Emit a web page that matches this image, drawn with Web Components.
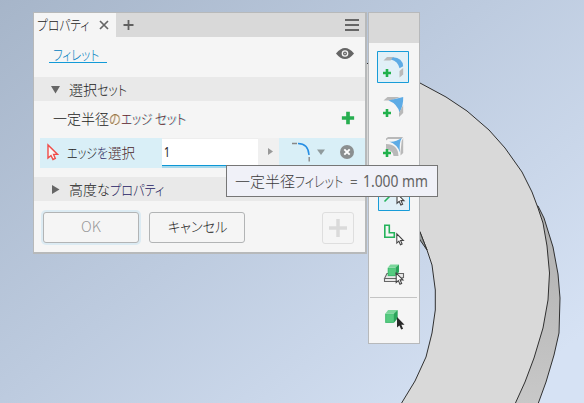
<!DOCTYPE html>
<html lang="ja"><head><meta charset="utf-8"><title>プロパティ</title>
<style>
body{margin:0;width:584px;height:403px;overflow:hidden;font-family:"Noto Sans CJK JP",sans-serif;font-weight:300;color:#222}
</style></head><body>
<cad-window></cad-window>
<script>
const define=(name,html,setup)=>customElements.define(name,class extends HTMLElement{
  connectedCallback(){
    if(this.shadowRoot)return;
    this.attachShadow({mode:'open'}).innerHTML=html;
    if(setup)setup(this,this.shadowRoot);
  }
});

/* Text run condensed horizontally to a given width */
define('fit-text',`<style>
:host{display:inline-block;flex:none;font-size:14px;line-height:20px;height:20px;white-space:pre}
span{display:inline-block;transform-origin:0 50%;font-feature-settings:"palt"}
</style><span><slot></slot></span>`,(h,r)=>{
  const w=+h.getAttribute('w'),s=r.querySelector('span');
  h.style.width=w+'px';
  s.style.transform='scaleX('+w/s.offsetWidth+')';
});

const plus='<path fill="#27ae50" d="M4 0h3.4v4h4v3.4h-4v4H4v-4H0V4h4z"/>';
const smallPlus='<path fill="#22b14c" d="M8.700 18h2.600v2.700H14v2.600h-2.700V26H8.700v-2.700H6v-2.600h2.700z"/>';
const arrow='<path d="M0 0v13.200l3-2.600 2.200 5 2.400-1-2.200-5h4z"/>';
const cube='<path fill="#38b768" d="M0 4h9v10H0z"/><path fill="#7bd69b" d="M0 4L3 0h10l-3 4z"/><path fill="#2aa45a" d="M9 4l4-4v9l-4 5z"/><path fill="#56cb80" d="M1 4.500h7.500V13H1z"/>';
const icons={
 round:'<path fill="#b9b9b9" d="M6.500 9.500L10 6h7l-3.500 3.500z"/><path fill="#5dabe5" d="M14 8.500L16 6.300q9.500.5 10.200 9l-3.700 2q-1.500-7-8.500-8.800z"/><path fill="#b9b9b9" d="M22.500 20l3.700-3v6.500l-3.700 3z"/>'+smallPlus,
 corner:'<path fill="#b9b9b9" d="M6.500 9.500L10.500 6H23l-9 3.500z"/><path fill="#5dabe5" d="M11.500 9.500L26.200 6q.3 9-3.700 15.500-2-8.500-11-12z"/><path fill="#b9b9b9" d="M22 26v-4l4.200-8v8z"/>'+smallPlus,
 full:'<path fill="#b9b9b9" d="M9 9.500V7.500L11 6h15.200L24 8H11zM9 13q12 0 12.500 12h-5q-.5-6-7.500-6.500zM23.500 24.500V21l1.200-11 1.500-3v15z"/><path fill="#5dabe5" d="M12 10.500q6 1 12.800-3.500-3 5-1.800 14.500-2.500-8-11-11z"/>'+smallPlus,
 edge:'<path d="M6.500 22.500L20 9" stroke="#24b35b" stroke-width="1.600"/><g transform="translate(19 14.500) scale(.74)" fill="#fff" stroke="#444" stroke-width="1.500">'+arrow+'</g>',
 loop:'<path fill="none" stroke="#24b35b" stroke-width="1.600" d="M7.800 8.200h4.500v7.500h5v4.500H7.800z"/><g transform="translate(19.800 16.800) scale(.7)" fill="#fff" stroke="#444" stroke-width="1.500">'+arrow+'</g>',
 feature:'<path fill="#e8e8e8" stroke="#666" stroke-width="1.100" d="M7.500 21.500L10 16.500h16.500v4l-4 1zM7.500 21.500V24.500h13l5.500-4"/><g transform="translate(10.700 7.500) scale(.87 .83)">'+cube+'</g><g transform="translate(19.200 16) scale(.72)" fill="#fff" stroke="#444" stroke-width="1.500">'+arrow+'</g>',
 solid:'<g transform="translate(8.200 7) scale(.96 .92)">'+cube+'</g><g transform="translate(20 14) scale(.8)" fill="#292929">'+arrow+'</g>'
};

define('tool-button',`<style>
:host{display:block;box-sizing:border-box;width:32px;height:32px;border-radius:1px}
:host([active]){background:#e1f0f7;box-shadow:inset 0 0 0 1px #189cd8}
svg{display:block}
</style><svg width="32" height="32"></svg>`,(h,r)=>{r.querySelector('svg').innerHTML=icons[h.getAttribute('icon')]});

define('tool-strip',`<style>
:host{display:flex;flex-direction:column;box-sizing:border-box;width:52px;height:332px;border:1px solid #b7b9bb;background:#f5f5f5}
header{height:30px;background:#d9d9d9;flex:none}
main{display:flex;flex-direction:column;gap:8px;padding:8px 0 0 8px}
hr{border:0;height:1px;background:#c4c4c4;margin:0 0 0 -7px;width:47px}
.alt{margin-left:1px}
.last{margin-top:-3px}
</style><header></header><main>
<tool-button active icon="round"></tool-button><tool-button icon="corner"></tool-button><tool-button icon="full"></tool-button>
<tool-button class="alt" active icon="edge" style="margin-top:8px"></tool-button>
<tool-button icon="loop" style="margin-top:-2px"></tool-button><tool-button icon="feature"></tool-button>
<hr><tool-button class="last" icon="solid"></tool-button></main>`);

define('section-bar',`<style>
:host{display:flex;align-items:center;height:24px;background:#e9e9e9;padding-left:17px;flex:none}
svg{width:9px;height:9px;margin-right:9px;fill:#666}
:host([closed]) svg{transform:rotate(-90deg)}
</style><svg viewBox="0 0 9 9"><path d="M0 1h9L4.500 8.500z"/></svg><slot></slot>`);

define('dialog-button',`<style>
:host{display:flex;box-sizing:border-box;width:96px;height:31px;border:1px solid #b2b4b5;border-radius:3px;align-items:center;justify-content:center;background:#f5f5f5;padding-bottom:3px}
:host([disabled]){color:#999;box-shadow:0 0 0 2px #dcebf3}
:host([square]){width:32px;height:32px;border-color:#dedede;padding:0}
</style><slot></slot>`);

define('edge-row',`<style>
:host{display:flex;height:30px;margin-left:6px;background:#d9eff7;flex:none}
.pick{display:flex;width:122px;align-items:center;box-sizing:border-box;padding:0 0 2px 7px}
.pick svg{margin-right:8px}
.field{box-sizing:border-box;width:96px;height:30px;background:linear-gradient(#fff 26px,#0d97d5 26px,#0d97d5 27px,#a5d8ec 27px,#a5d8ec 29px,#d9eff7 29px);border-top:1px solid #eee;padding:3px 0 0 2px;line-height:0}
.more{width:21px;height:27px;background:#f0f0f0;display:flex;align-items:center;justify-content:center;margin-right:1px}
.more svg{margin-left:3px}
.shape{padding:4px 0 0 11px}
</style>
<div class="pick"><svg width="12" height="19" viewBox="0 0 12 19"><path fill="#f7f7f7" stroke="#f04d49" stroke-width="1.400" d="M1 2v13l3-2.500 2 4 2.300-1-1.700-4.100h4z"/></svg>
<fit-text w="30">エッジ</fit-text><fit-text w="11" style="color:#2c2c70;text-shadow:1px 0 #e8e8a066">を</fit-text><fit-text w="27" style="color:#4a2529">選択</fit-text></div>
<div class="field"><fit-text w="6" style="font-family:'Noto Sans',sans-serif;font-weight:400">1</fit-text></div>
<div class="more"><svg width="5" height="7"><path fill="#999" d="M0 0v7l5-3.500z"/></svg></div>
<div class="shape"><svg width="74" height="24"><path d="M1 1.500h5M18.200 15v4.500" fill="none" stroke="#888" stroke-width="1.400"/><path d="M7 1.500Q17.200 1.500 18 13" fill="none" stroke="#268ee4" stroke-width="1.500"/><path fill="#909b9d" d="M26 7.500h8L30 13z"/><circle cx="56" cy="10" r="7" fill="#8b8f90"/><path d="M53.300 7.300l5.400 5.400m0-5.400l-5.400 5.400" stroke="#fff" stroke-width="1.900"/></svg></div>`);

define('property-panel',`<style>
:host{display:flex;flex-direction:column;box-sizing:border-box;width:334px;height:242px;background:#f5f5f5;border:solid #b7b9ba;border-width:1px 2px 2px 1px}
.tabs{display:flex;height:24px;background:#d9d9d9;flex:none}
.tab{display:flex;align-items:center;width:82px;box-sizing:border-box;padding-left:3px;background:#f5f5f5}
.tab fit-text{margin-top:-2px}
.tab svg{margin-left:10px}
.add{margin:6px 0 0 7px}.menu{margin:6px 6px 0 auto}
.crumb{display:flex;justify-content:space-between;height:40px;flex:none;padding:7px 11px 0 15px;box-sizing:border-box}
.link{width:54px;height:18px;padding-left:4px;border-bottom:1px solid #129ad7;color:#0080c0;line-height:0}
.crumb svg{margin-top:3px}
.set{display:flex;align-items:center;height:37px;padding:0 10px 3px 19px;flex:none;box-sizing:border-box}
.set svg{margin-left:auto}
.gap{height:9px;flex:none}
.foot{display:flex;padding:11px 11px 0 9px;gap:10px}
.foot>:last-child{margin-left:auto}
.warm{text-shadow:1px 0 #30e0f0aa;color:#702428}
</style>
<div class="tabs"><div class="tab"><fit-text w="52">プロパティ</fit-text><svg width="10" height="10"><path d="M1 1l8 8M9 1L1 9" stroke="#666" stroke-width="1.700"/></svg></div>
<svg class="add" width="11" height="12"><path d="M5.500 1v10M.5 6h10" stroke="#606060" stroke-width="1.800"/></svg>
<svg class="menu" width="14" height="13"><path fill="#666" d="M0 0h14v2H0zM0 5h14v2H0zM0 10h14v2H0z"/></svg></div>
<div class="crumb"><div class="link"><fit-text w="46">フィレット</fit-text></div>
<svg width="18" height="13"><path fill="#656565" d="M0 6.500Q9-4.500 18 6.500 9 17.500 0 6.500z"/><circle cx="9" cy="6.500" r="3.300" fill="#f5f5f5"/><circle cx="9" cy="6.500" r="2" fill="#656565"/><circle cx="9" cy="6.500" r=".8" fill="#ddd"/></svg></div>
<section-bar><fit-text w="28">選択</fit-text><fit-text w="30">セット</fit-text></section-bar>
<div class="set"><fit-text w="56">一定半径</fit-text><fit-text w="12" style="color:#80603a;text-shadow:1px 0 #f2b348aa">の</fit-text><fit-text w="31" class="warm">エッジ</fit-text><fit-text w="34" class="warm"> セット</fit-text>
<svg width="14" height="14" viewBox="-.8 -.8 13 13">${plus}</svg></div>
<edge-row></edge-row><div class="gap"></div>
<section-bar closed><fit-text w="28">高度</fit-text><fit-text w="13">な</fit-text><fit-text w="54" style="color:#24206a;text-shadow:1px 0 #eeeabd99">プロパティ</fit-text></section-bar>
<div class="foot"><dialog-button disabled><fit-text w="20">OK</fit-text></dialog-button>
<dialog-button><fit-text w="59">キャンセル</fit-text></dialog-button>
<dialog-button square><svg width="20" height="20"><path d="M10 1v18M1 10h18" stroke="#dadada" stroke-width="3.500"/></svg></dialog-button></div>`);

define('value-tip',`<style>
:host{display:flex;align-items:center;box-sizing:border-box;width:212px;height:32px;padding-left:8px;border:1px solid #767676;background:#f0f1f8;color:#3c3c3c}
fit-text{font-size:15px}.num{font-family:"Noto Sans",sans-serif;font-weight:400;color:#626262;margin-left:7px}
</style><fit-text w="60">一定半径</fit-text><fit-text w="48">フィレット</fit-text><fit-text class="num" w="8">=</fit-text><fit-text class="num" w="65" style="margin-left:5px;font-size:16px">1.000 mm</fit-text>`);

define('model-view',`<style>:host{display:block}svg{display:block}</style>
<svg width="584" height="403"><defs><linearGradient id="s" gradientUnits="userSpaceOnUse" x1="30" y1="-30" x2="430" y2="460"><stop stop-color="#a6b5c9"/><stop offset=".5" stop-color="#bdcbdf"/><stop offset="1" stop-color="#d6e2f4"/></linearGradient>
<linearGradient id="e" x1="0" y1="0" x2="0" y2="1"><stop stop-color="#afafaf"/><stop offset="1" stop-color="#c8c8c8"/></linearGradient></defs>
<path fill="url(#s)" d="M0 0h584v403H0z"/>
<g stroke="#303030" stroke-width="1" stroke-linejoin="round">
<path fill="url(#e)" d="M538 206L544 218 553 247 558 274 560 298 559 333 554 355 546 382 538 404H500V210z"/>
<path fill="#d9d9d9" d="M366 63L395 72 420 83 446 97 467 111 489 130 505 148 522 172 532 192 538 208 543 223 547 246 549.500 273 548 300 543 328 534 358 525 382 515 404H401L415 381 426 357 432 333 435.300 310 435.300 290 432 265 427 250 420 232 405 210 366 180z"/>
<path fill="#979b9b" d="M410 218L420 232 427 250 420 240z"/>
</g></svg>`);

define('cad-window',`<style>
:host{display:block;position:relative;width:584px;height:403px}
property-panel{position:absolute;left:33px;top:12px}
tool-strip{position:absolute;left:368px;top:12px}
value-tip{position:absolute;left:226px;top:165px}
</style><model-view></model-view><property-panel></property-panel><tool-strip></tool-strip><value-tip></value-tip>`);
</script></body></html>
